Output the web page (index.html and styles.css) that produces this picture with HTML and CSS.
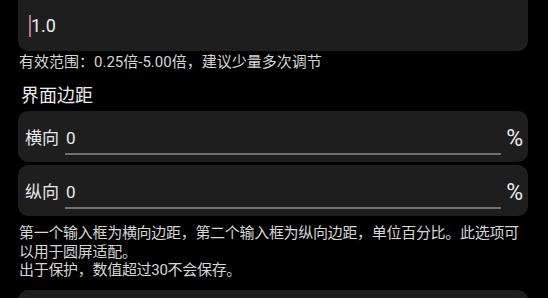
FILE: index.html
```html
<!DOCTYPE html>
<html lang="zh-CN">
<head>
<meta charset="utf-8">
<link rel="stylesheet" href="styles.css">
</head>
<body>
<div class="page">
  <div class="card card-top">
    <span class="caret"></span><span class="value-big">1.0</span>
  </div>
  <p class="help help-one">有效范围：0.25倍-5.00倍，建议少量多次调节</p>
  <h2 class="section-title">界面边距</h2>
  <div class="card field">
    <span class="field-label">横向</span>
    <div class="field-input"><span>0</span></div>
    <span class="field-unit">%</span>
  </div>
  <div class="card field">
    <span class="field-label">纵向</span>
    <div class="field-input"><span>0</span></div>
    <span class="field-unit">%</span>
  </div>
  <p class="help help-two">第一个输入框为横向边距，第二个输入框为纵向边距，单位百分比。此选项可以用于圆屏适配。<br>出于保护，数值超过30不会保存。</p>
  <div class="card card-bottom"></div>
</div>
</body>
</html>
```

FILE: styles.css
```css
html, body {
  margin: 0;
  padding: 0;
  background: #000;
  overflow: hidden;
  height: 298px;
}

.page {
  width: 510px;
  margin-left: 18px;
  font-family: Roboto, "Noto Sans CJK SC", sans-serif;
  color: #e4e4e4;
}

.card {
  background: #1e1e1e;
  border-radius: 10px;
}

.card-top {
  margin-top: -12px;
  height: 63px;
  display: flex;
  align-items: center;
  padding: 12px 0 0 11px;
  box-sizing: border-box;
}

.caret {
  width: 2px;
  height: 22px;
  background: #c86a8e;
}

.value-big {
  font-size: 18px;
  color: #ececec;
  line-height: 22px;
}

.help {
  margin: 0;
  font-size: 15px;
  color: #d6d6d6;
}

.help-one {
  margin-top: 2px;
  line-height: 19px;
  padding-left: 1px;
}

.section-title {
  margin: 12px 0 3px 3px;
  font-size: 18px;
  font-weight: normal;
  line-height: 24px;
  color: #ececec;
}

.field {
  height: 51px;
  display: flex;
  align-items: center;
  padding: 0 5px 0 7px;
  box-sizing: border-box;
  margin-bottom: 3px;
}

.field-label {
  font-size: 17px;
  line-height: 22px;
  margin-top: 2px;
  color: #e8e8e8;
}

.field-input {
  flex: 1;
  margin-left: 6px;
  margin-top: 8px;
  height: 28px;
  border-bottom: 2px solid #6e6e6e;
  box-sizing: border-box;
  font-size: 17px;
  line-height: 22px;
  color: #ececec;
  padding-left: 1px;
}

.field-unit {
  font-size: 23px;
  line-height: 24px;
  margin-left: 5px;
  margin-top: 5px;
  color: #ececec;
}

.help-two {
  margin-top: 8px;
  line-height: 18.5px;
  padding-left: 1px;
  letter-spacing: -0.3px;
}

.card-bottom {
  margin-top: 10px;
  height: 40px;
}
```
